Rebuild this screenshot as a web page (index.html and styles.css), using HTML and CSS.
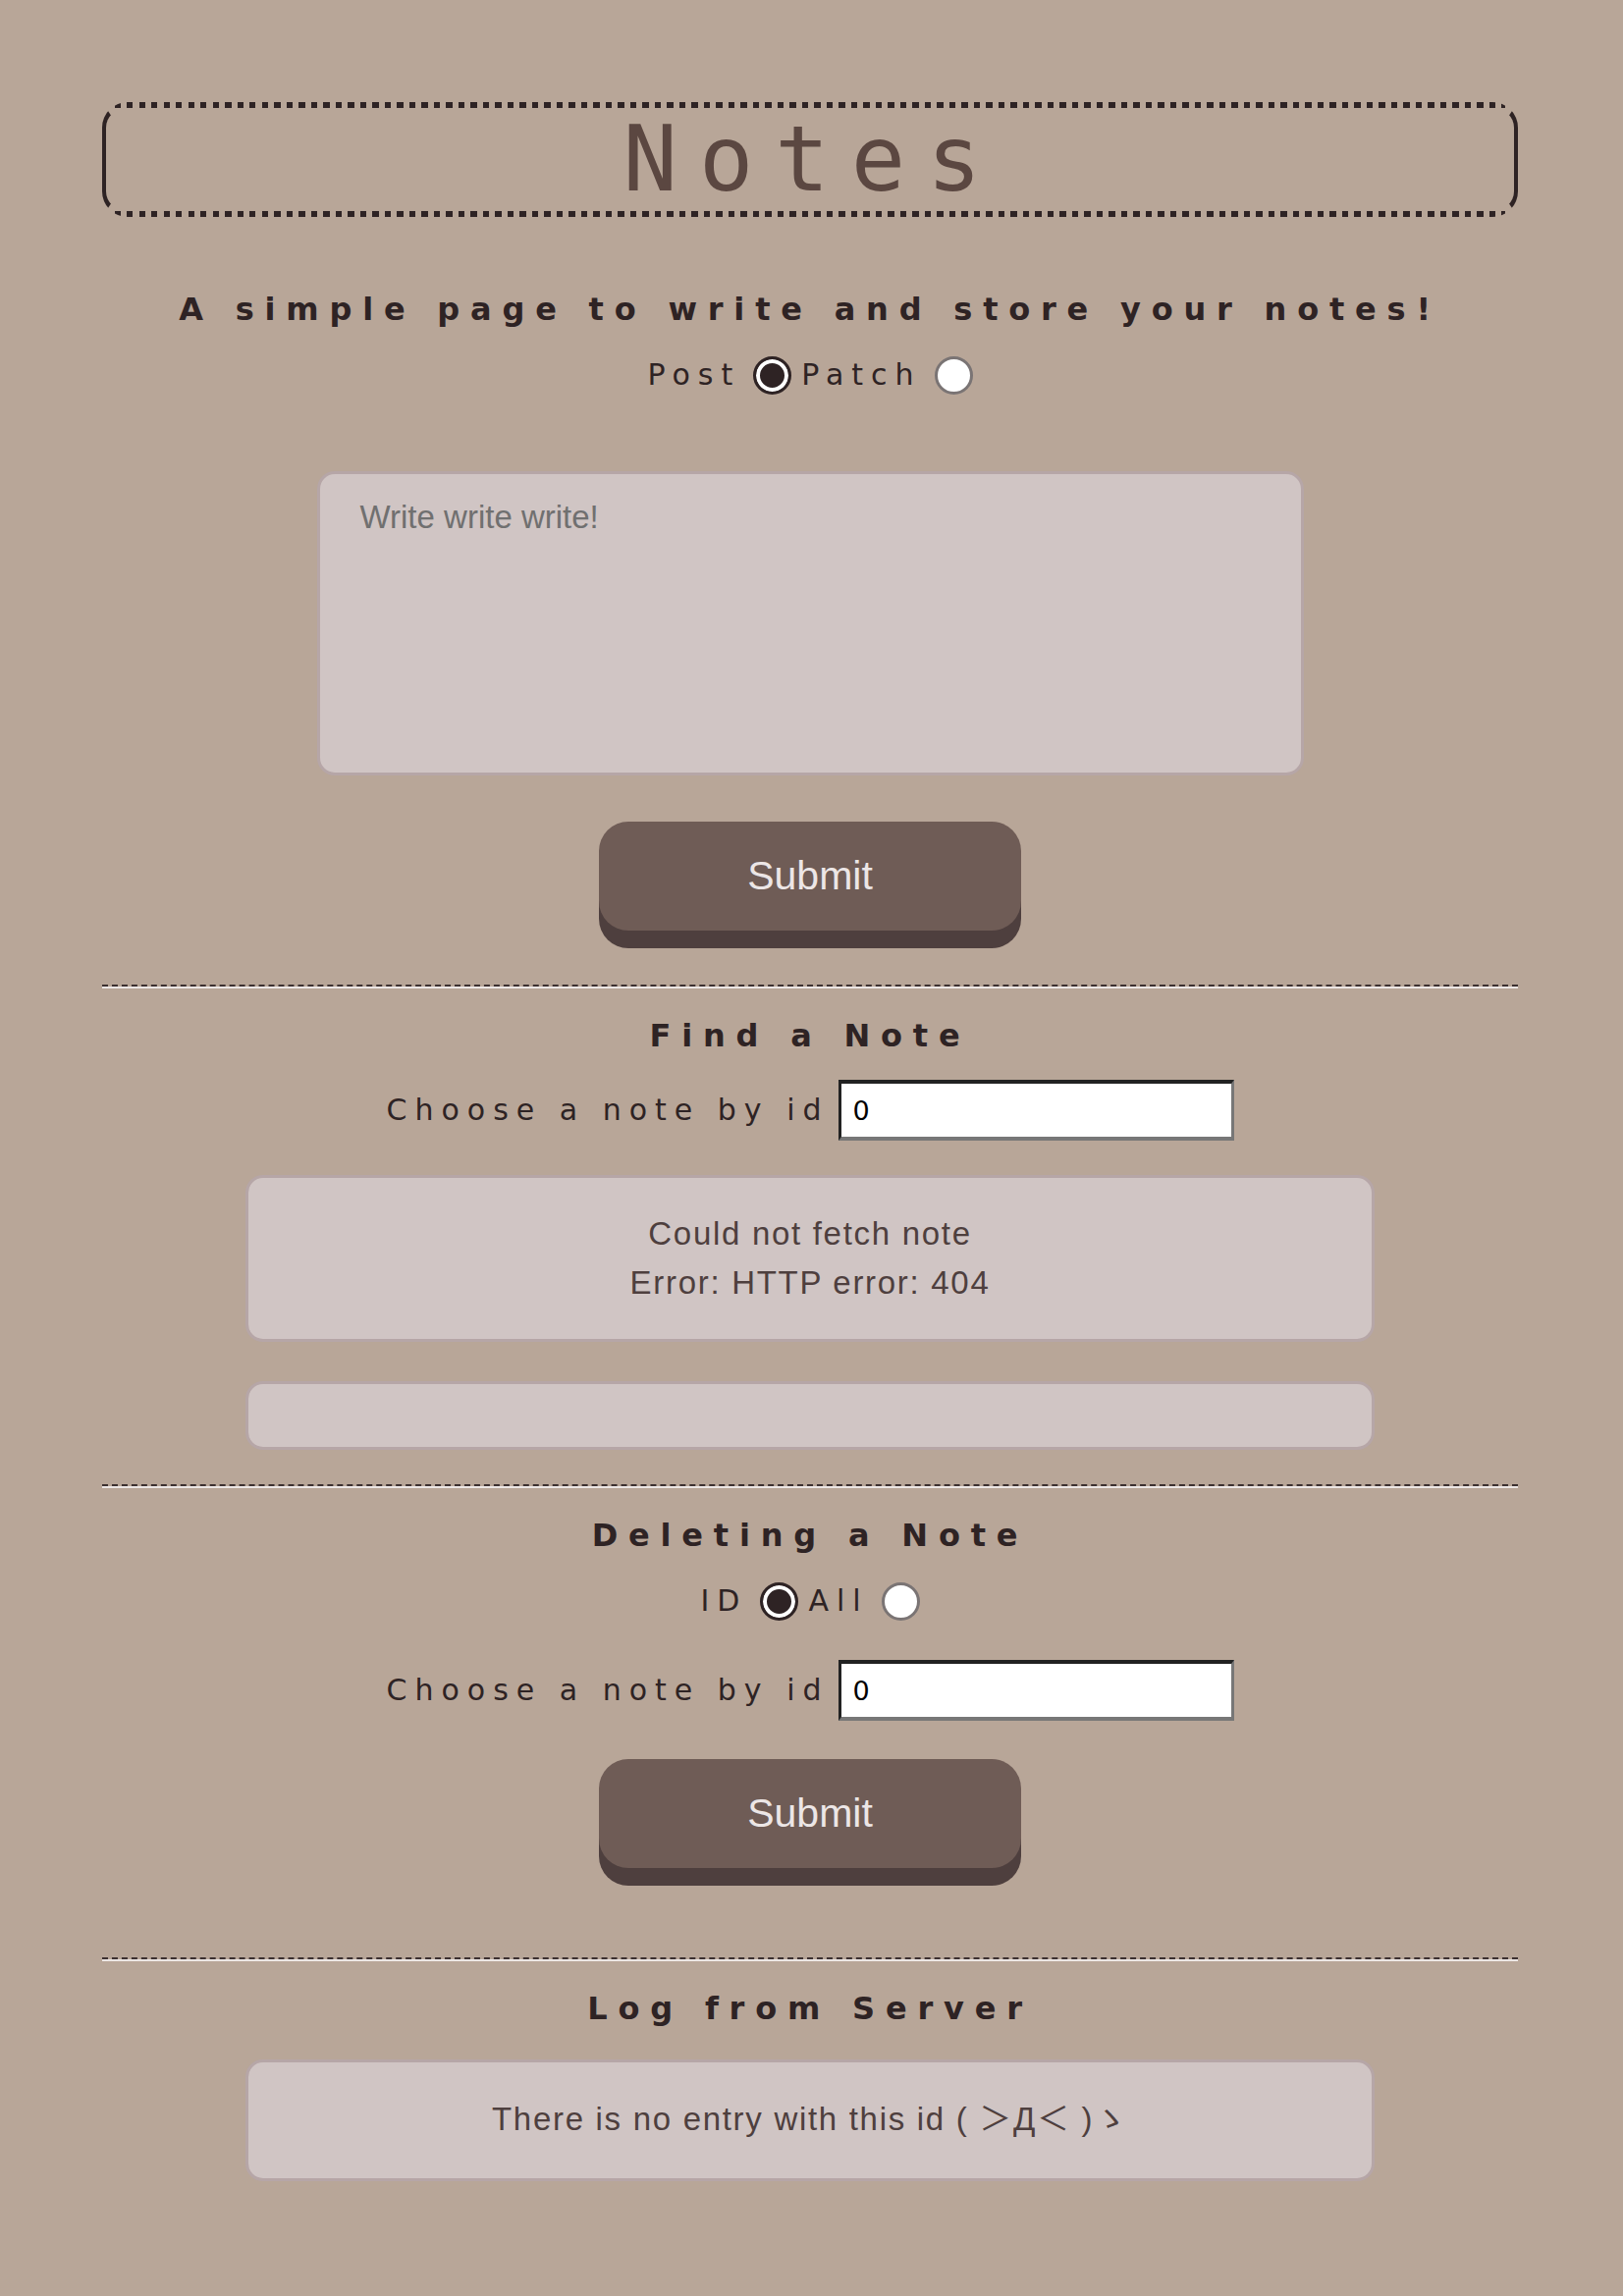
FILE: index.html
```html
<!DOCTYPE html>
<html lang="en">
<head>
<meta charset="utf-8">
<title>Notes</title>
<link rel="stylesheet" href="styles.css">
</head>
<body>
<main class="page">
  <header class="title-box"><h1 class="title">Notes</h1></header>

  <h2 class="heading subtitle">A simple page to write and store your notes!</h2>
  <div class="radio-row">
    <span class="label">Post</span><input type="radio" class="radio" name="mode" checked>
    <span class="label">Patch</span><input type="radio" class="radio" name="mode">
  </div>
  <textarea class="editor" placeholder="Write write write!"></textarea>
  <button class="submit submit-first" type="button">Submit</button>

  <hr class="divider">

  <h2 class="heading">Find a Note</h2>
  <div class="id-row">
    <span class="label">Choose a note by id</span><input class="id-input" type="text" value="0">
  </div>
  <div class="result result-error">
    <div class="result-line">Could not fetch note</div>
    <div class="result-line">Error: HTTP error: 404</div>
  </div>
  <div class="result result-empty"></div>

  <hr class="divider">

  <h2 class="heading">Deleting a Note</h2>
  <div class="radio-row">
    <span class="label">ID</span><input type="radio" class="radio" name="del" checked>
    <span class="label">All</span><input type="radio" class="radio" name="del">
  </div>
  <div class="id-row id-row-delete">
    <span class="label">Choose a note by id</span><input class="id-input" type="text" value="0">
  </div>
  <button class="submit submit-delete" type="button">Submit</button>

  <hr class="divider divider-log">

  <h2 class="heading">Log from Server</h2>
  <div class="result result-log">
    <div class="result-line">There is no entry with this id ( ＞Д＜ )ゝ</div>
  </div>
</main>
</body>
</html>
```

FILE: styles.css
```css
html, body {
  margin: 0;
  padding: 0;
}

body {
  background: #b8a698;
  font-family: "DejaVu Sans", "Noto Sans", sans-serif;
  color: #2e2324;
  min-height: 2339px;
}

.page {
  display: flex;
  flex-direction: column;
  align-items: center;
  padding: 104px 107px 80px 104px;
}

.title-box {
  align-self: stretch;
  box-sizing: border-box;
  height: 117px;
  border-style: solid;
  border-width: 6px 4px;
  border-color: transparent #2e2324;
  border-radius: 26px;
  background-image:
    repeating-linear-gradient(90deg, #2e2324 0 6px, transparent 6px 12.5px),
    repeating-linear-gradient(90deg, #2e2324 0 6px, transparent 6px 12.5px);
  background-size: calc(100% - 26px) 6px, calc(100% - 26px) 6px;
  background-position: center top, center bottom;
  background-repeat: no-repeat;
  background-origin: border-box;
  background-clip: border-box;
}

.title {
  margin: 0;
  text-align: center;
  font-family: "DejaVu Sans Mono", monospace;
  font-weight: normal;
  font-size: 92px;
  line-height: 105px;
  letter-spacing: 22px;
  padding-left: 6px;
  color: #5b4741;
}

.heading {
  margin: 30px 0 0 0;
  font-family: "DejaVu Sans", sans-serif;
  font-weight: bold;
  font-size: 32px;
  line-height: 37px;
  letter-spacing: 10.8px;
  color: #2e2324;
}

.subtitle {
  margin-top: 76px;
}

.radio-row {
  display: flex;
  align-items: center;
  margin-top: 28px;
  height: 40px;
}

.label {
  font-family: "DejaVu Sans", sans-serif;
  font-size: 30px;
  line-height: 40px;
  letter-spacing: 8px;
  color: #2e2324;
}

.radio {
  appearance: none;
  -webkit-appearance: none;
  box-sizing: border-box;
  width: 39px;
  height: 39px;
  margin: 0 10px 0 13px;
  border-radius: 50%;
  border: 3px solid #7a7474;
  background: #ffffff;
}

.radio:last-child {
  margin-right: 0;
}

.radio:checked {
  border-color: #2e2324;
  background: #2e2324;
  box-shadow: inset 0 0 0 4px #ffffff;
}

.editor {
  display: block;
  box-sizing: border-box;
  width: 1005px;
  height: 310px;
  margin-top: 78px;
  padding: 25px 41px;
  background: #d0c5c4;
  border: 3px solid #b6a6a7;
  border-radius: 18px;
  resize: none;
  font-family: "Liberation Sans", Arial, sans-serif;
  font-size: 33px;
  color: #4e3f3e;
}

.editor::placeholder {
  color: #707070;
}

.submit {
  display: block;
  box-sizing: border-box;
  width: 430px;
  height: 111px;
  margin-top: 47px;
  border: none;
  border-radius: 30px;
  background: #6f5c56;
  box-shadow: 0 18px 0 #4e3f3e;
  color: #ece6e6;
  font-family: "Liberation Sans", Arial, sans-serif;
  font-size: 41px;
  padding: 0;
}

.submit-delete {
  margin-top: 39px;
}

.divider {
  align-self: stretch;
  height: 0;
  margin: 55px 0 0 0;
  border: none;
  border-top: 2px dashed #3c3030;
  border-bottom: 2px solid #ece6e4;
}

.divider-log {
  margin-top: 91px;
}

.divider + .heading {
  margin-top: 30px;
}

.id-row {
  display: flex;
  align-items: center;
  margin-top: 26px;
}

.id-row-delete {
  margin-top: 40px;
}

.id-input {
  box-sizing: border-box;
  width: 403px;
  height: 62px;
  margin: 0 0 0 9px;
  padding: 0 12px;
  background: #ffffff;
  border-style: solid;
  border-width: 4px 3px 4px 3px;
  border-color: #222222 #777777 #777777 #222222;
  font-family: "DejaVu Sans", sans-serif;
  font-size: 27px;
  color: #000000;
}

.result {
  box-sizing: border-box;
  width: 1150px;
  margin-top: 35px;
  padding: 32px 20px;
  background: #d0c5c4;
  border: 3px solid #b6a6a7;
  border-radius: 18px;
  text-align: center;
  font-family: "Liberation Sans", Arial, "Noto Sans CJK JP", sans-serif;
  font-size: 33px;
  line-height: 50px;
  letter-spacing: 1.7px;
  color: #4e3f3e;
}

.result-empty {
  margin-top: 40px;
}

.result-empty + .divider {
  margin-top: 35px;
}

.result-log {
  margin-top: 33px;
  padding: 33px 20px 35px;
}
```
